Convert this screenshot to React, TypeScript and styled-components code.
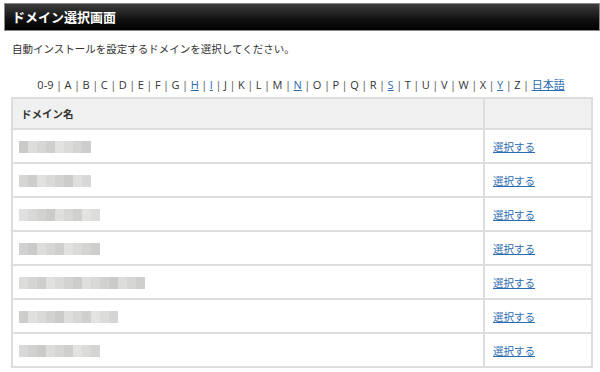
import styled, { createGlobalStyle } from "styled-components";

const GlobalStyle = createGlobalStyle`
  body {
    margin: 0;
    background: #fff;
    font-family: "Noto Sans CJK JP", "Noto Sans", sans-serif;
    color: #333;
  }
`;

const Page = styled.div`
  width: 600px;
  height: 372px;
  overflow: hidden;
  padding-top: 3px;
  box-sizing: border-box;
`;

const TitleBar = styled.h1`
  margin: 0 0 0 4px;
  height: 28px;
  box-sizing: border-box;
  border: 1px solid #8a8a8a;
  background: linear-gradient(#3c3c3c, #111 60%, #000);
  color: #fff;
  font-size: 13px;
  font-weight: bold;
  line-height: 26px;
  padding-left: 7px;
`;

const Lead = styled.p`
  margin: 10px 0 0 12px;
  font-size: 10.5px;
  line-height: 16px;
`;

const Index = styled.div`
  margin: 20px 0 0 0;
  padding-left: 2px;
  text-align: center;
  white-space: nowrap;
  font-size: 11px;
  line-height: 16px;
  font-family: "Open Sans", "Noto Sans CJK JP", sans-serif;
`;

const Letter = styled.span<{ $link?: boolean }>`
  color: ${({ $link }) => ($link ? "#2b6cb0" : "#333")};
  text-decoration: ${({ $link }) => ($link ? "underline" : "none")};
`;

const Sep = styled.span`
  color: #555;
  margin: 0 2.5px;
`;

const Table = styled.table`
  margin: 4px 0 0 11px;
  width: 582px;
  border-collapse: collapse;
  font-size: 10.5px;
`;

const Th = styled.th`
  background: #f0f0f0;
  border: 2px solid #ddd;
  height: 31px;
  box-sizing: border-box;
  text-align: left;
  padding: 0 0 0 8px;
  font-weight: bold;
  color: #333;
`;

const Td = styled.td`
  border: 2px solid #ddd;
  height: 34px;
  box-sizing: border-box;
  padding: 0 0 0 6px;
  vertical-align: middle;
`;

const LinkTd = styled(Td)`
  width: 108px;
  padding-left: 8px;
`;

const Select = styled.a`
  color: #2b6cb0;
  text-decoration: underline;
`;

const Blur = styled.div`
  display: flex;
  height: 12px;
  margin-top: 2px;
  filter: blur(0.6px);
`;

const Cell = styled.span`
  width: 9px;
  height: 12px;
`;

const letters = ["0-9", ..."ABCDEFGHIJKLMNOPQRSTUVWXYZ".split(""), "日本語"];
const linked = new Set(["H", "I", "N", "S", "Y", "日本語"]);

const rows = [8, 8, 9, 9, 14, 11, 9];

function shade(r: number, i: number) {
  const v = 202 + ((r * 37 + i * 71) % 26);
  return `rgb(${v},${v},${v - 2})`;
}

export default function App() {
  return (
    <Page>
      <GlobalStyle />
      <TitleBar>ドメイン選択画面</TitleBar>
      <Lead>自動インストールを設定するドメインを選択してください。</Lead>
      <Index>
        {letters.map((l, i) => (
          <span key={l}>
            <Letter $link={linked.has(l)}>{l}</Letter>
            {i < letters.length - 1 && <Sep>|</Sep>}
          </span>
        ))}
      </Index>
      <Table>
        <thead>
          <tr>
            <Th>ドメイン名</Th>
            <Th />
          </tr>
        </thead>
        <tbody>
          {rows.map((n, r) => (
            <tr key={r}>
              <Td>
                <Blur>
                  {Array.from({ length: n }).map((_, i) => (
                    <Cell key={i} style={{ background: shade(r, i) }} />
                  ))}
                </Blur>
              </Td>
              <LinkTd>
                <Select>選択する</Select>
              </LinkTd>
            </tr>
          ))}
        </tbody>
      </Table>
    </Page>
  );
}
